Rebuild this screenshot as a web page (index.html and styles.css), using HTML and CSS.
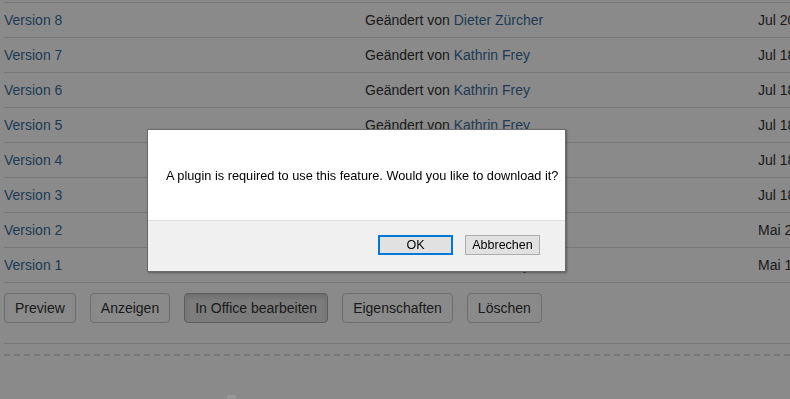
FILE: index.html
```html
<!DOCTYPE html>
<html>
<head>
<meta charset="utf-8">
<title>Versionen</title>
<link rel="stylesheet" href="styles.css">
</head>
<body>
    <div class="page">
        <div class="versions">
            <div class="row">
                <div class="cell"><a href="#">Version 8</a></div>
                <div class="cell">Geändert von <a href="#">Dieter Zürcher</a></div>
                <div class="cell">Jul 20, 2016</div>
            </div>
            <div class="row">
                <div class="cell"><a href="#">Version 7</a></div>
                <div class="cell">Geändert von <a href="#">Kathrin Frey</a></div>
                <div class="cell">Jul 18, 2016</div>
            </div>
            <div class="row">
                <div class="cell"><a href="#">Version 6</a></div>
                <div class="cell">Geändert von <a href="#">Kathrin Frey</a></div>
                <div class="cell">Jul 18, 2016</div>
            </div>
            <div class="row">
                <div class="cell"><a href="#">Version 5</a></div>
                <div class="cell">Geändert von <a href="#">Kathrin Frey</a></div>
                <div class="cell">Jul 18, 2016</div>
            </div>
            <div class="row">
                <div class="cell"><a href="#">Version 4</a></div>
                <div class="cell">Geändert von <a href="#">Kathrin Frey</a></div>
                <div class="cell">Jul 18, 2016</div>
            </div>
            <div class="row">
                <div class="cell"><a href="#">Version 3</a></div>
                <div class="cell">Geändert von <a href="#">Kathrin Frey</a></div>
                <div class="cell">Jul 18, 2016</div>
            </div>
            <div class="row">
                <div class="cell"><a href="#">Version 2</a></div>
                <div class="cell">Geändert von <a href="#">Kathrin Frey</a></div>
                <div class="cell">Mai 24, 2016</div>
            </div>
            <div class="row">
                <div class="cell"><a href="#">Version 1</a></div>
                <div class="cell">Geändert von <a href="#">Kathrin Frey</a></div>
                <div class="cell">Mai 12, 2016</div>
            </div>
        </div>

        <div class="actions">
            <button class="btn">Preview</button>
            <button class="btn">Anzeigen</button>
            <button class="btn active">In Office bearbeiten</button>
            <button class="btn">Eigenschaften</button>
            <button class="btn">Löschen</button>
        </div>

        <div class="divider"></div>
        <div class="dashed"></div>
        <div class="grip"></div>
    </div>

    <div class="overlay"></div>

    <div class="dialog">
        <div class="dialog-body">A plugin is required to use this feature. Would you like to download it?</div>
        <div class="dialog-footer">
            <button class="dlg-btn default">OK</button>
            <button class="dlg-btn">Abbrechen</button>
        </div>
    </div>
</body>
</html>
```

FILE: styles.css
```css
html, body {
    margin: 0;
    padding: 0;
    overflow: hidden;
    background: #fff;
}

body {
    font-family: "Liberation Sans", Arial, Helvetica, sans-serif;
    font-size: 14px;
    color: #333;
}

a {
    color: #3a6e9c;
    text-decoration: none;
}

.page {
    width: 790px;
    height: 399px;
    padding-top: 2px;
    box-sizing: border-box;
}

.versions {
    margin-left: 4px;
    border-top: 1px solid #ddd;
}

.row {
    display: grid;
    grid-template-columns: 361px 393px 200px;
    height: 35px;
    border-bottom: 1px solid #ddd;
    box-sizing: border-box;
    align-items: center;
    white-space: nowrap;
}

.actions {
    display: flex;
    gap: 14px;
    margin: 10px 0 0 4px;
    padding-bottom: 20px;
    border-bottom: 1px solid #ddd;
}

.btn {
    font-family: inherit;
    font-size: 14px;
    line-height: 18px;
    color: #333;
    background: #fff;
    border: 1px solid #ccc;
    border-radius: 4px;
    padding: 5px 10px;
    margin: 0;
}

.btn.active {
    background: #e6e6e6;
    border-color: #adadad;
    box-shadow: inset 0 3px 5px rgba(0, 0, 0, .125);
}

.divider {
    height: 10px;
}

.dashed {
    margin-left: 4px;
    border-top: 2px dashed #ddd;
}

.grip {
    position: relative;
    z-index: 3;
    width: 9px;
    height: 4px;
    margin: 39px 0 0 227px;
    background: #979797;
}

.overlay {
    position: fixed;
    left: 0;
    top: 0;
    right: 0;
    bottom: 0;
    background: rgba(0, 0, 0, .46);
    z-index: 1;
}

.dialog {
    position: fixed;
    left: 147px;
    top: 129px;
    width: 419px;
    height: 143px;
    box-sizing: border-box;
    border: 1px solid #6a6a6a;
    box-shadow: 1px 1px 2px rgba(0, 0, 0, .35);
    background: #fff;
    z-index: 2;
    display: flex;
    flex-direction: column;
    font-family: "Liberation Sans", Arial, sans-serif;
    font-size: 12px;
    color: #000;
}

.dialog-body {
    height: 90px;
    display: flex;
    align-items: center;
    padding-left: 18px;
    font-size: 12.75px;
}

.dialog-footer {
    flex: 1;
    background: #f0f0f0;
    border-top: 1px solid #dfdfdf;
    display: flex;
    justify-content: flex-end;
    align-items: flex-start;
    gap: 12px;
    padding: 14px 25px 0 0;
}

.dlg-btn {
    width: 75px;
    height: 20px;
    padding: 0;
    margin: 0;
    font-family: inherit;
    font-size: 12.5px;
    color: #000;
    background: #e1e1e1;
    border: 1px solid #adadad;
}

.dlg-btn.default {
    border: 2px solid #0078d7;
}
```
